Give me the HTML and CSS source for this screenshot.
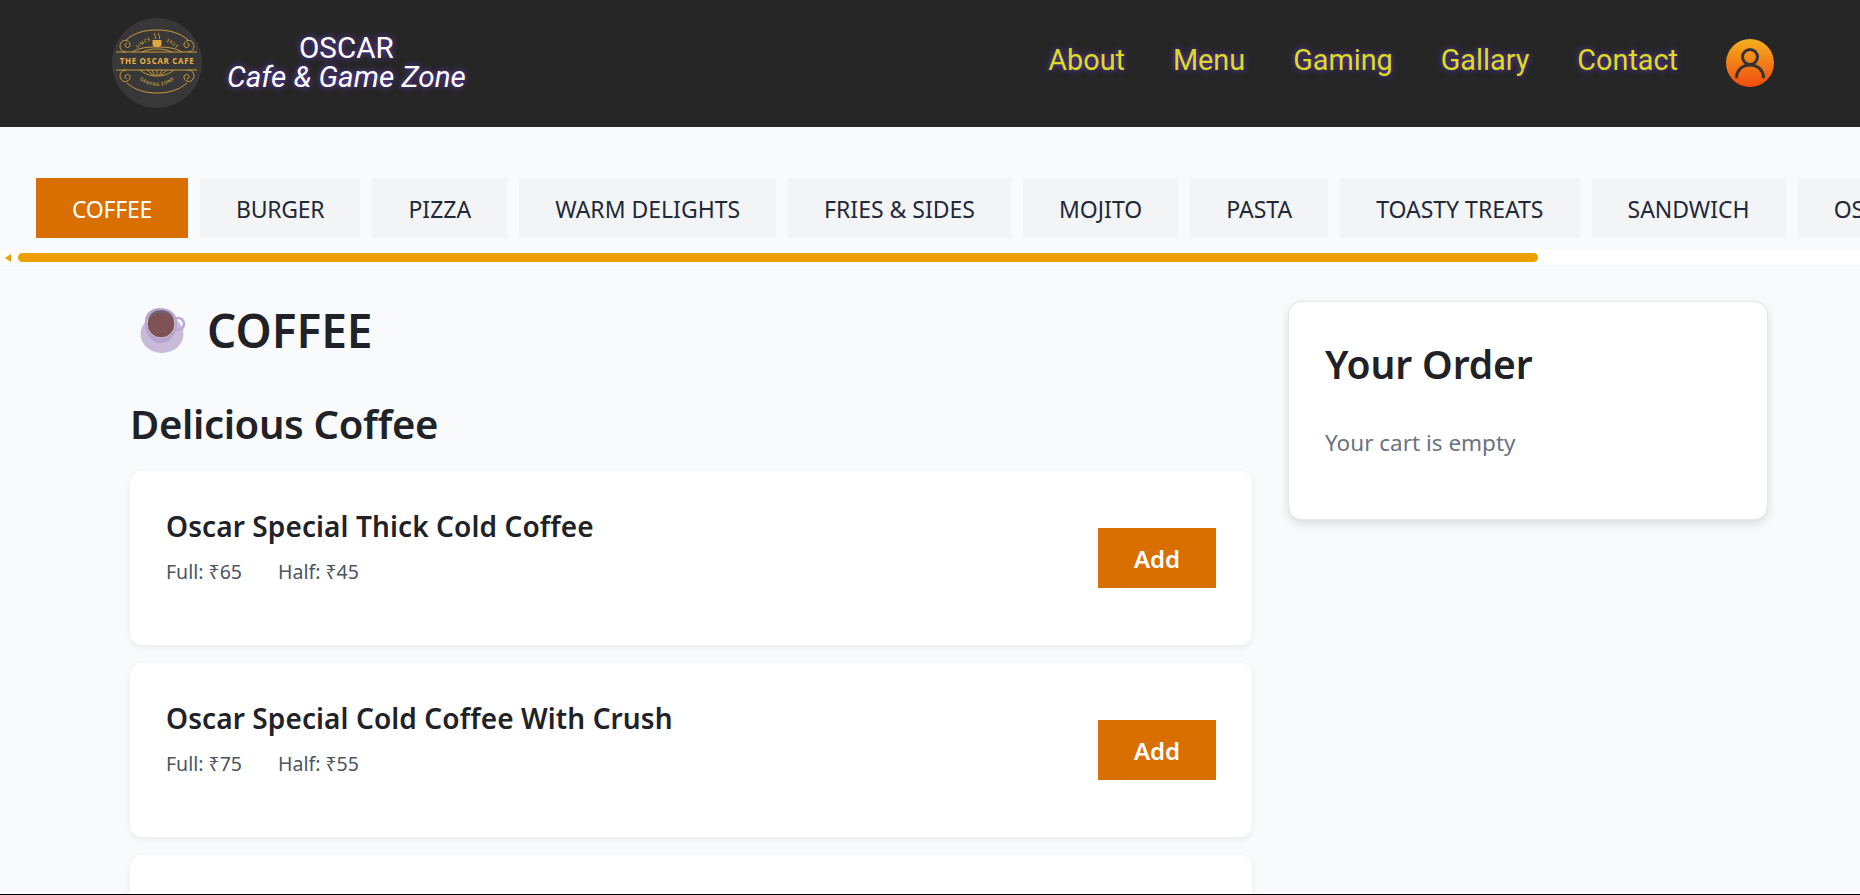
FILE: index.html
```html
<!DOCTYPE html>
<html lang="en">
<head>
    <meta charset="UTF-8">
    <meta name="viewport" content="width=device-width, initial-scale=1.0">
    <title>Oscar Cafe & Game Zone</title>
    <link rel="stylesheet" href="styles.css">
</head>
<body>
<div class="page">
    <header class="topbar">
        <div class="brand">
            <svg class="logo" viewBox="0 0 90 90" aria-label="The Oscar Cafe logo">
                <circle cx="45" cy="45" r="45" fill="#383838"/>
                <g fill="none" stroke="#dba53c" stroke-width="0.9">
                    <path d="M4 34H85M4 52H85"/>
                    <path d="M14 22C22 15 32 12 45 12C58 12 68 15 76 22"/>
                    <path d="M20 34C27 30 34 29 45 29C56 29 63 30 70 34"/>
                    <path d="M30 34C34 32 39 31 45 31C51 31 56 32 60 34"/>
                    <path d="M14 34C8 34 7 28 9 25C11 21 17 22 18 26C19 30 13 31 13 27C13 25 15 25 15 26"/>
                    <path d="M76 34C82 34 83 28 81 25C79 21 73 22 72 26C71 30 77 31 77 27C77 25 75 25 75 26"/>
                    <path d="M14 52C8 52 7 58 9 61C11 65 17 64 18 60C19 56 13 55 13 59C13 61 15 61 15 60"/>
                    <path d="M76 52C82 52 83 58 81 61C79 65 73 64 72 60C71 56 77 55 77 59C77 61 75 61 75 60"/>
                    <path d="M15 65C23 72 33 75 45 75C57 75 67 72 75 65"/>
                    <path d="M28 52C33 56 38 58 45 58C52 58 57 56 62 52"/>
                    <path d="M45 52V58M40 52L43 58M50 52L47 58M35 52L41 57M55 52L49 57"/>
                    <path d="M43 15C41 17 45 18 43 21M47 15C45 17 49 18 47 21"/>
                </g>
                <path d="M40.5 22H49.5V26C49.5 28 48 29 46.5 29H43.5C42 29 40.5 28 40.5 26Z" fill="#e0aa42"/>
                <path id="logoTop" d="M21 38A26 26 0 0 1 69 38" fill="none"/>
                <path id="logoBottom" d="M22 54A26 26 0 0 0 68 54" fill="none"/>
                <text class="logo-small"><textPath href="#logoTop" startOffset="50%" text-anchor="middle">SINCE &#160; &#160; &#160; &#160; 2021</textPath></text>
                <text class="logo-small"><textPath href="#logoBottom" startOffset="50%" text-anchor="middle">GAMING ZONE</textPath></text>
                <text class="logo-name" x="45" y="46" text-anchor="middle">THE OSCAR CAFE</text>
            </svg>
            <div class="brand-text">
                <span>OSCAR</span>
                <em>Cafe &amp; Game Zone</em>
            </div>
        </div>
        <nav class="mainnav">
            <a href="#">About</a>
            <a href="#">Menu</a>
            <a href="#">Gaming</a>
            <a href="#">Gallary</a>
            <a href="#">Contact</a>
            <svg class="avatar" viewBox="0 0 48 48" aria-label="Profile">
                <defs>
                    <linearGradient id="avatarFill" x1="0" y1="0" x2="0" y2="1">
                        <stop offset="0" stop-color="#f5b01f"/>
                        <stop offset="1" stop-color="#f04c0e"/>
                    </linearGradient>
                </defs>
                <circle cx="24" cy="24" r="24" fill="url(#avatarFill)"/>
                <circle cx="24" cy="18" r="7.5" fill="none" stroke="#333" stroke-width="3"/>
                <path d="M10.5 38C11.5 30 17 26 24 26C31 26 36.5 30 37.5 38" fill="none" stroke="#333" stroke-width="3" stroke-linecap="round"/>
            </svg>
        </nav>
    </header>

    <div class="tabs">
        <button class="tab tight active">Coffee</button>
        <button class="tab tight">Burger</button>
        <button class="tab">Pizza</button>
        <button class="tab">Warm Delights</button>
        <button class="tab">Fries &amp; Sides</button>
        <button class="tab">Mojito</button>
        <button class="tab">Pasta</button>
        <button class="tab">Toasty Treats</button>
        <button class="tab">Sandwich</button>
        <button class="tab">Oscar Special</button>
    </div>
    <div class="scrollbar">
        <span class="scroll-arrow"></span>
        <span class="scroll-thumb"></span>
    </div>

    <main class="content">
        <section class="menu">
            <h1 class="menu-title">
                <svg class="cup" viewBox="0 0 46 46" aria-hidden="true">
                    <ellipse cx="22" cy="27" rx="21.5" ry="19" fill="#c9bada"/>
                    <circle cx="38" cy="17" r="6" fill="none" stroke="#bcaad2" stroke-width="2.5"/>
                    <path d="M5 14C5 5 13 1 20 1C29 1 36 6 37 14C37 24 33 35 21 36C10 36 5 26 5 14Z" fill="#b5a3cf"/>
                    <circle cx="21" cy="17" r="14" fill="#7e5256" stroke="#d8cfe6" stroke-width="1"/>
                    <path d="M8 13C10 6 15 3 21 3C27 3 32 6 34 13C31 8 26 6 21 6C15 6 11 8 8 13Z" fill="#6d6273"/>
                </svg>
                COFFEE
            </h1>
            <h2 class="menu-sub">Delicious Coffee</h2>

            <div class="card">
                <div class="card-info">
                    <h3 class="card-name">Oscar Special Thick Cold Coffee</h3>
                    <div class="prices"><span>Full: ₹65</span><span>Half: ₹45</span></div>
                </div>
                <button class="add">Add</button>
            </div>
            <div class="card">
                <div class="card-info">
                    <h3 class="card-name">Oscar Special Cold Coffee With Crush</h3>
                    <div class="prices"><span>Full: ₹75</span><span>Half: ₹55</span></div>
                </div>
                <button class="add">Add</button>
            </div>
            <div class="card"></div>
        </section>

        <aside class="order">
            <h2 class="order-title">Your Order</h2>
            <p class="order-empty">Your cart is empty</p>
        </aside>
    </main>
</div>
</body>
</html>
```

FILE: styles.css
```css
* {
    box-sizing: border-box;
}

body {
    margin: 0;
    font-family: 'Noto Sans', sans-serif;
    background-color: #f9fafb;
    color: #1f2227;
}

.page {
    height: 895px;
    overflow: hidden;
    border-bottom: 1px solid #000;
}

.topbar {
    height: 127px;
    background-color: #262626;
    display: flex;
    align-items: center;
    justify-content: space-between;
    padding: 0 86px 1px 112px;
    font-family: Roboto, sans-serif;
}

.brand {
    display: flex;
    align-items: center;
    gap: 25px;
}

.logo {
    width: 90px;
    height: 90px;
    display: block;
}

.logo-name {
    font-family: 'Open Sans', sans-serif;
    font-size: 8px;
    font-weight: 700;
    letter-spacing: 0.65px;
    fill: #e8b048;
}

.logo-small {
    font-family: 'Open Sans', sans-serif;
    font-size: 4.6px;
    font-weight: 600;
    letter-spacing: 0.5px;
    fill: #d6a03a;
}

.brand-text {
    display: flex;
    flex-direction: column;
    align-items: center;
    color: #fff;
    font-size: 29.6px;
    line-height: 29px;
    text-shadow: 0 0 6px #6d3fd0;
}

.brand-text em {
    font-style: italic;
}

.mainnav {
    display: flex;
    align-items: center;
    gap: 48px;
}

.mainnav a {
    color: #dedc22;
    font-size: 28.8px;
    text-decoration: none;
    text-shadow: 0 0 6px #6d3fd0;
    margin-top: -6px;
}

.avatar {
    width: 48px;
    height: 48px;
    display: block;
}

.tabs {
    display: flex;
    gap: 12px;
    padding: 51px 0 12px 36px;
    overflow: hidden;
}

.tab {
    height: 60px;
    padding: 1px 36px 0;
    border: none;
    background-color: #f3f4f6;
    color: #1f2937;
    font-family: inherit;
    font-size: 23px;
    text-transform: uppercase;
    white-space: nowrap;
    flex-shrink: 0;
}

.tab.tight {
    letter-spacing: -0.25px;
}

.tab.active {
    background-color: #d96f00;
    color: #fff;
}

.scrollbar {
    height: 15px;
    background-color: #fff;
    display: flex;
    align-items: center;
    padding-left: 5px;
}

.scroll-arrow {
    width: 0;
    height: 0;
    border-style: solid;
    border-width: 4.5px 6px 4.5px 0;
    border-color: transparent #ee9f00 transparent transparent;
    margin-right: 7px;
}

.scroll-thumb {
    width: 1520px;
    height: 9px;
    background-color: #ee9f00;
    border-radius: 5px;
}

.content {
    display: grid;
    grid-template-columns: 1122px 480px;
    gap: 36px;
    align-items: start;
    padding: 36px 0 0 130px;
}

.menu-title {
    display: flex;
    align-items: center;
    gap: 21px;
    margin: 1px 0 0;
    padding-left: 10px;
    height: 56px;
    font-size: 46px;
    font-weight: 560;
}

.cup {
    width: 46px;
    height: 46px;
}

.menu-sub {
    margin: 0;
    padding: 41px 0 22px;
    font-size: 40px;
    line-height: 50px;
    font-weight: 560;
    letter-spacing: -0.35px;
}

.card {
    height: 174px;
    margin-bottom: 18px;
    padding: 36px;
    display: flex;
    align-items: center;
    justify-content: space-between;
    background-color: #fff;
    border-radius: 12px;
    box-shadow: 0 2px 6px rgba(0, 0, 0, 0.07);
}

.card-info {
    align-self: flex-start;
}

.card-name {
    margin: 0;
    font-size: 28px;
    font-weight: 560;
    letter-spacing: 0.1px;
}

.prices {
    display: flex;
    gap: 36px;
    margin-top: 13px;
    font-size: 19.5px;
    color: #4b5563;
}

.add {
    width: 118px;
    height: 60px;
    border: none;
    background-color: #d96f00;
    color: #fff;
    font-family: inherit;
    font-size: 24px;
    font-weight: 560;
}

.order {
    height: 219px;
    padding: 35px 36px;
    background-color: #fff;
    border: 1px solid #e5e7eb;
    border-radius: 14px;
    box-shadow: 0 4px 10px rgba(0, 0, 0, 0.12);
}

.order-title {
    margin: 0;
    font-size: 39px;
    font-weight: 560;
    letter-spacing: -0.1px;
}

.order-empty {
    margin: 37px 0 0;
    font-size: 22.5px;
    color: #6b7280;
}
```
